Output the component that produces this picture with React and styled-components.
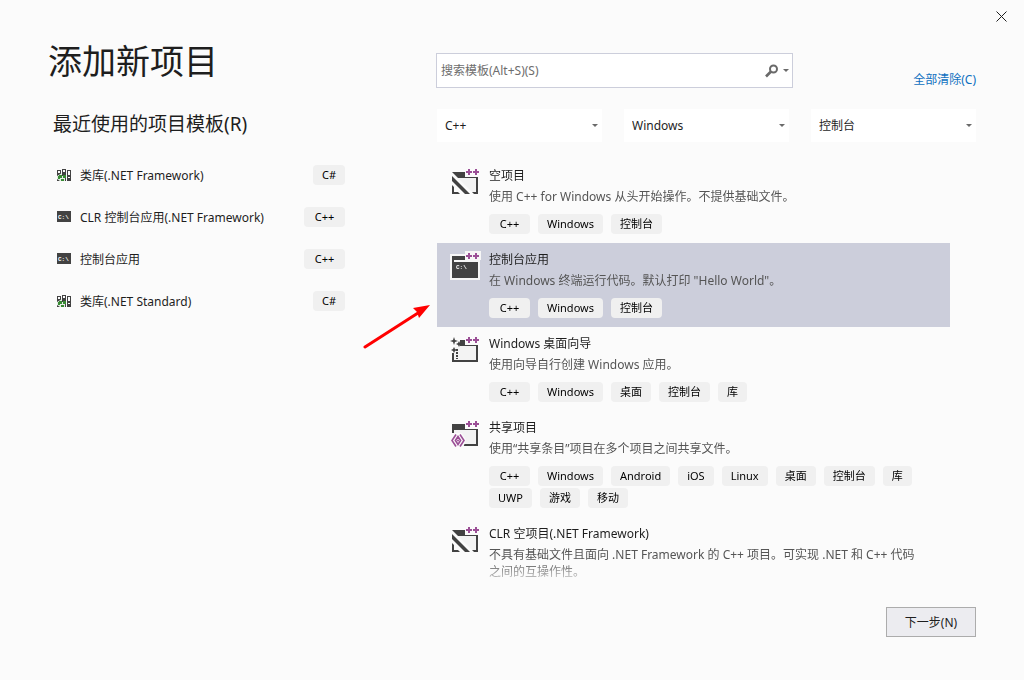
import { useState } from "react";
import styled, { createGlobalStyle } from "styled-components";

const recentTemplates = [
  { name: "类库(.NET Framework)", lang: "C#", icon: "library" },
  { name: "CLR 控制台应用(.NET Framework)", lang: "C++", icon: "console" },
  { name: "控制台应用", lang: "C++", icon: "console" },
  { name: "类库(.NET Standard)", lang: "C#", icon: "library" },
];

const filters = [
  { label: "语言", value: "C++" },
  { label: "平台", value: "Windows" },
  { label: "项目类型", value: "控制台" },
];

const templates = [
  {
    name: "空项目",
    icon: "empty",
    text: "使用 C++ for Windows 从头开始操作。不提供基础文件。",
    tags: ["C++", "Windows", "控制台"],
  },
  {
    name: "控制台应用",
    icon: "console",
    text: '在 Windows 终端运行代码。默认打印 "Hello World"。',
    tags: ["C++", "Windows", "控制台"],
  },
  {
    name: "Windows 桌面向导",
    icon: "wizard",
    text: "使用向导自行创建 Windows 应用。",
    tags: ["C++", "Windows", "桌面", "控制台", "库"],
  },
  {
    name: "共享项目",
    icon: "shared",
    text: "使用“共享条目”项目在多个项目之间共享文件。",
    tags: [
      "C++",
      "Windows",
      "Android",
      "iOS",
      "Linux",
      "桌面",
      "控制台",
      "库",
      "UWP",
      "游戏",
      "移动",
    ],
  },
  {
    name: "CLR 空项目(.NET Framework)",
    icon: "empty",
    text: "不具有基础文件且面向 .NET Framework 的 C++ 项目。可实现 .NET 和 C++ 代码之间的互操作性。",
    tags: [],
  },
];

const Chevron = () => (
  <svg width="6" height="3" viewBox="0 0 6 3" aria-hidden="true">
    <path d="M0 0h6L3 3z" fill="#6a6a6a" />
  </svg>
);

const PlusPlus = ({ halo = "#fbfbfb" }) => (
  <>
    <path d="M15 0h16v9h-2v1H15z" fill={halo} />
    <path
      d="M16 4h2v-2h2v2h2v2h-2v2h-2v-2h-2zM23 4h2v-2h2v2h2v2h-2v2h-2v-2h-2z"
      fill="#9b4f96"
    />
  </>
);

const Folder = () => (
  <>
    <path d="M2 10h26v17H2z" fill="#424242" />
    <path d="M2 5h14v5H2z" fill="#424242" />
    <path d="M4 11h22v14H4z" fill="#f3f3f3" />
  </>
);

const TemplateIcon = ({ type }) => (
  <BigIcon viewBox="0 0 32 32" aria-hidden="true">
    {type === "empty" && (
      <>
        <Folder />
        <path d="M1 4l23 23v1H1z" fill="#fbfbfb" />
        <path d="M2 9v5l13 13h5z" fill="#424242" />
        <path d="M2 18v9h8l-2-2H4v-5z" fill="#424242" />
      </>
    )}
    {type === "console" && (
      <>
        <path d="M0 3h30v26H0z" fill="#f6f6f6" />
        <path d="M2 5h14v4H2zM2 11h26v16H2zM2 9h2v3H2z" fill="#424242" />
        <IconText x="6" y="18" fontSize="6">
          C:\
        </IconText>
      </>
    )}
    {type === "wizard" && (
      <>
        <Folder />
        <path d="M0 2h10v10H7v7H0z" fill="#fbfbfb" />
        <path d="M4 12h5v13H4z" fill="#f3f3f3" />
        <path
          d="M4 2l1 3 3 1-3 1-1 3-1-3-3-1 3-1zM9 6l1 2 2 1-2 1-1 2-1-2-2-1 2-1zM4 12l1 2 2 1-2 1-1 2-1-2-2-1 2-1z"
          fill="#424242"
        />
        <path d="M6 14h2v2H6zM6 17h2v2H6zM6 20h2v2H6zM6 23h2v1H6zM2 18h2v8H2z" fill="#424242" />
      </>
    )}
    {type === "shared" && (
      <>
        <Folder />
        <path d="M0 14h12l4 7-3 8H0z" fill="#fbfbfb" />
        <path
          d="M6 15.5l-4 6 4 6M10 15.5l4 6-4 6M8 17.5l-2.600 4 2.600 4 2.600-4z"
          fill="none"
          stroke="#9b4f96"
          strokeWidth="1.6"
        />
        <circle cx="8" cy="21.500" r="1" fill="#9b4f96" />
      </>
    )}
    <PlusPlus halo={type === "console" ? "#f6f6f6" : "#fbfbfb"} />
  </BigIcon>
);

const RecentIcon = ({ type }) =>
  type === "console" ? (
    <SmallIcon viewBox="0 0 14 14" aria-hidden="true">
      <path d="M0 1h14v11H0z" fill="#424242" />
      <IconText x="1" y="9" fontSize="6">
        C:\
      </IconText>
    </SmallIcon>
  ) : (
    <SmallIcon viewBox="0 0 14 14" aria-hidden="true">
      <path d="M0 2h4v11H0zM5 1h4v12H5zM10 2h4v11h-4z" fill="#424242" />
      <path
        d="M1 3h2v2H1zM6 2h2v2H6zM11 3h2v4h-2zM11 9h2v1h-2z"
        fill="#fbfbfb"
      />
      <path d="M0 8l5-3v3h3v5H3l-3-2z" fill="#e6efe6" />
      <path
        d="M1 8h1v-1h3v3H3v1H1zM6 7h3v3H6zM4 11h3v2H4z"
        fill="#388a34"
      />
    </SmallIcon>
  );

const App = () => {
  const [selected, setSelected] = useState("控制台应用");
  return (
    <>
      <GlobalStyle />
      <Dialog>
        <TitleBar>
          <CloseButton type="button" aria-label="关闭">
            <svg width="11" height="11" viewBox="0 0 11 11">
              <path d="M.5.5l10 10M10.5.5l-10 10" stroke="#1e1e1e" />
            </svg>
          </CloseButton>
        </TitleBar>
        <Content>
          <Recent>
            <h1>添加新项目</h1>
            <h2>最近使用的项目模板(R)</h2>
            <ul>
              {recentTemplates.map((item) => (
                <RecentRow key={item.name}>
                  <RecentIcon type={item.icon} />
                  <span>{item.name}</span>
                  <Tag $wide={item.lang === "C++"}>{item.lang}</Tag>
                </RecentRow>
              ))}
            </ul>
          </Recent>
          <Browse>
            <SearchRow>
              <SearchBox>
                <input
                  type="text"
                  aria-label="搜索模板"
                  placeholder="搜索模板(Alt+S)(S)"
                />
                <svg width="14" height="14" viewBox="0 0 14 14" aria-hidden="true">
                  <circle
                    cx="8.5"
                    cy="5"
                    r="3.5"
                    fill="none"
                    stroke="#6a6a6a"
                    strokeWidth="2"
                  />
                  <path d="M6 7.5l-5 5" stroke="#6a6a6a" strokeWidth="2.6" />
                </svg>
                <Chevron />
              </SearchBox>
              <ClearLink href="#clear">全部清除(C)</ClearLink>
            </SearchRow>
            <Filters>
              {filters.map((filter) => (
                <Filter key={filter.label}>
                  <select aria-label={filter.label} defaultValue={filter.value}>
                    <option>{filter.value}</option>
                  </select>
                  <Chevron />
                </Filter>
              ))}
            </Filters>
            <Results>
              <TemplateList>
                {templates.map((item) => (
                  <Template
                    key={item.name}
                    $selected={item.name === selected}
                    onClick={() => setSelected(item.name)}
                  >
                    <TemplateIcon type={item.icon} />
                    <div>
                      <h3>{item.name}</h3>
                      <p>{item.text}</p>
                      {item.tags.length > 0 && (
                        <Tags>
                          {item.tags.map((tag) => (
                            <Tag key={tag} $wide={tag === "C++"}>
                              {tag}
                            </Tag>
                          ))}
                        </Tags>
                      )}
                    </div>
                  </Template>
                ))}
              </TemplateList>
              <Pointer viewBox="0 0 70 46" aria-hidden="true">
                <path d="M3 44L56 10" stroke="#f00" strokeWidth="3" strokeLinecap="round" />
                <path d="M68 2L51 5l4 4 2 6z" fill="#f00" />
              </Pointer>
            </Results>
          </Browse>
        </Content>
        <Footer>
          <NextButton type="button">下一步(N)</NextButton>
        </Footer>
      </Dialog>
    </>
  );
};

const GlobalStyle = createGlobalStyle`
  * {
    box-sizing: border-box;
    margin: 0;
    padding: 0;
  }
  body {
    background: #fbfbfb;
    color: #1e1e1e;
  }
  body, input, select, button {
    font-family: "Noto Sans", "Noto Sans CJK SC", sans-serif;
    font-size: 12px;
  }
  h1, h2, h3 {
    font-weight: 400;
  }
  ul {
    list-style: none;
  }
`;

const Dialog = styled.div`
  display: flex;
  flex-direction: column;
  height: 100vh;
`;
const TitleBar = styled.header`
  display: flex;
  justify-content: flex-end;
  height: 32px;
`;
const CloseButton = styled.button`
  display: flex;
  align-items: center;
  justify-content: center;
  width: 46px;
  border: none;
  background: transparent;
  cursor: pointer;
`;
const Content = styled.main`
  flex: 1;
  min-height: 0;
  display: grid;
  grid-template-columns: 297fr 540fr;
  grid-template-rows: minmax(0, 1fr);
  column-gap: 91px;
  padding: 0 48px;
`;
const Recent = styled.section`
  padding-top: 5px;
  h1 {
    font-size: 34px;
    line-height: 48px;
  }
  h2 {
    margin: 25px 0 16px;
    padding-left: 5px;
    font-size: 19px;
    line-height: 28px;
  }
`;
const RecentRow = styled.li`
  display: flex;
  align-items: center;
  height: 42px;
  padding-left: 9px;
  span:nth-child(2) {
    flex: 1;
    padding-left: 9px;
  }
`;
const Tag = styled.span`
  min-width: ${(props) => (props.$wide ? "41px" : "29px")};
  padding: 0 9px;
  border-radius: 4px;
  background: #f0f0f0;
  color: #000;
  font-size: 11px;
  line-height: 20px;
  text-align: center;
`;
const Browse = styled.section`
  display: flex;
  flex-direction: column;
  padding-top: 21px;
`;
const SearchRow = styled.div`
  display: grid;
  grid-template-columns: 357fr 183fr;
  align-items: center;
`;
const SearchBox = styled.div`
  display: flex;
  align-items: center;
  gap: 4px;
  height: 35px;
  padding: 0 3px 0 4px;
  border: 1px solid #cccedb;
  background: white;
  input {
    flex: 1;
    min-width: 0;
    border: none;
    outline: none;
    background: transparent;
  }
  input::placeholder {
    color: #6d6d6d;
    opacity: 1;
  }
`;
const ClearLink = styled.a`
  justify-self: end;
  padding-top: 18px;
  color: #0e70c0;
  line-height: 17px;
  text-decoration: none;
`;
const Filters = styled.div`
  display: grid;
  grid-template-columns: repeat(3, 1fr);
  gap: 22px;
  margin: 21px 0 17px;
  padding-left: 1px;
`;
const Filter = styled.label`
  display: grid;
  align-items: center;
  background: white;
  select {
    grid-area: 1 / 1;
    height: 33px;
    padding-left: 8px;
    border: none;
    background: transparent;
    color: #1e1e1e;
    appearance: none;
  }
  svg {
    grid-area: 1 / 1;
    justify-self: end;
    margin-right: 4px;
    pointer-events: none;
  }
`;
const Results = styled.div`
  position: relative;
  flex: 1;
  min-height: 0;
  padding: 0 26px 0 1px;
`;
const TemplateList = styled.ul`
  height: 100%;
  overflow-y: auto;
  scrollbar-width: none;
  mask-image: linear-gradient(#000 calc(100% - 20px), rgba(0, 0, 0, 0.3));
`;
const Template = styled.li`
  display: flex;
  gap: 7px;
  padding: 8px 8px 9px 13px;
  background: ${(props) => (props.$selected ? "#cccedb" : "transparent")};
  cursor: pointer;
  h3 {
    font-size: 12px;
    line-height: 17px;
  }
  p {
    margin-top: 4px;
    padding-right: 24px;
    color: #555;
    line-height: 17px;
  }
`;
const Tags = styled.div`
  display: flex;
  flex-wrap: wrap;
  gap: 2px 8px;
  margin-top: 9px;
`;
const BigIcon = styled.svg`
  flex: none;
  width: 32px;
  height: 32px;
`;
const SmallIcon = styled.svg`
  flex: none;
  width: 14px;
  height: 14px;
`;
const IconText = styled.text`
  fill: white;
  font-family: "Liberation Mono", monospace;
  font-weight: 700;
`;
const Pointer = styled.svg`
  position: absolute;
  top: 144px;
  left: -74px;
  width: 70px;
  height: 46px;
  pointer-events: none;
`;
const Footer = styled.footer`
  display: flex;
  justify-content: flex-end;
  padding: 27px 48px 43px;
`;
const NextButton = styled.button`
  width: 90px;
  height: 30px;
  border: 1px solid #acacac;
  background: #ececf0;
  color: #1e1e1e;
  cursor: pointer;
`;

export default App;
